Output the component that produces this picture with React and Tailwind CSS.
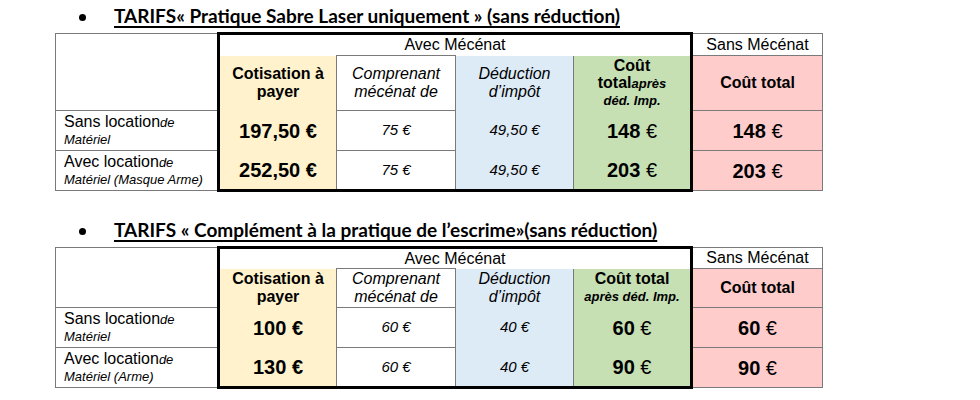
import React from "react";

const table1 = {
  h1: "h-[22px]",
  h2: "h-[55px]",
  cout: (
    <div className="leading-[17px]">
      <div className="text-[16px] font-bold">Coût</div>
      <div>
        <span className="text-[16px] font-bold">total</span>
        <span className="text-[13px] font-bold italic">après</span>
      </div>
      <div className="text-[13px] font-bold italic">déd. Imp.</div>
    </div>
  ),
  rows: [
    { a: "Sans location", b: "Matériel", cot: "197,50 €", comp: "75 €", ded: "49,50 €", tot: "148" },
    { a: "Avec location", b: "Matériel (Masque Arme)", cot: "252,50 €", comp: "75 €", ded: "49,50 €", tot: "203" },
  ],
};

const table2 = {
  h1: "h-[21px]",
  h2: "h-[39px]",
  cout: (
    <div className="leading-[18px]">
      <div className="text-[16px] font-bold">Coût total</div>
      <div className="text-[13px] font-bold italic">après déd. Imp.</div>
    </div>
  ),
  rows: [
    { a: "Sans location", b: "Matériel", cot: "100 €", comp: "60 €", ded: "40 €", tot: "60" },
    { a: "Avec location", b: "Matériel (Arme)", cot: "130 €", comp: "60 €", ded: "40 €", tot: "90" },
  ],
};

function Title({ children }) {
  return (
    <div className="flex items-center h-[32px] pl-[80px]">
      <div className="w-[34px] flex">
        <div className="w-[7px] h-[7px] rounded-full bg-black ml-[-1px] mt-[2px]"></div>
      </div>
      <h2
        className="text-[19px] font-bold underline underline-offset-[3px] decoration-[1.5px] text-black whitespace-nowrap"
        style={{ fontFamily: "Lato, 'Open Sans', sans-serif" }}
      >
        {children}
      </h2>
    </div>
  );
}

function PriceTable({ t }) {
  return (
    <table className="table-fixed border-collapse ml-[55px] text-black" style={{ fontFamily: "'Liberation Sans', Arial, sans-serif" }}>
      <colgroup>
        <col className="w-[163px]" />
        <col className="w-[118px]" />
        <col className="w-[119px]" />
        <col className="w-[118px]" />
        <col className="w-[118px]" />
        <col className="w-[131px]" />
      </colgroup>
      <tbody>
        <tr className={t.h1}>
          <td rowSpan={2} className="border border-[#7a7a7a]"></td>
          <td colSpan={4} className="border-t-[3px] border-x-[3px] border-black text-center text-[16px] leading-none">
            Avec Mécénat
          </td>
          <td className="border border-[#7a7a7a] text-center text-[16px] leading-none">Sans Mécénat</td>
        </tr>
        <tr className={t.h2}>
          <td className="bg-[#fff2cc] border-l-[3px] border-l-black border-r border-r-[#7a7a7a] text-center text-[16px] font-bold leading-[18px]">
            Cotisation à<br />payer
          </td>
          <td className="border border-[#7a7a7a] text-center text-[16px] italic leading-[18px]">
            Comprenant<br />mécénat de
          </td>
          <td className="bg-[#ddebf7] border-x border-[#7a7a7a] text-center text-[16px] italic leading-[18px]">
            Déduction<br />d’impôt
          </td>
          <td className="bg-[#c6e0b4] border-l border-l-[#7a7a7a] border-r-[3px] border-r-black text-center">
            {t.cout}
          </td>
          <td className="bg-[#ffcccc] border border-[#7a7a7a] text-center text-[16px] font-bold">Coût total</td>
        </tr>
        {t.rows.map((r, i) => {
          const last = i === t.rows.length - 1;
          return (
            <tr key={i} className="h-[40px]">
              <td className="border border-[#7a7a7a] pl-[8px] leading-[16px]">
                <span className="text-[16px]">{r.a}</span>
                <span className="text-[13px] italic">de</span>
                <br />
                <span className="text-[13px] italic">{r.b}</span>
              </td>
              <td
                className={
                  last
                    ? "bg-[#fff2cc] border-l-[3px] border-b-[3px] border-black border-r border-r-[#7a7a7a] text-center text-[20px] font-bold"
                    : "bg-[#fff2cc] border-l-[3px] border-l-black border-r border-r-[#7a7a7a] text-center text-[20px] font-bold"
                }
              >
                {r.cot}
              </td>
              <td
                className={
                  last
                    ? "border border-[#7a7a7a] border-b-[3px] border-b-black text-center text-[15px] italic"
                    : "border border-[#7a7a7a] text-center text-[15px] italic"
                }
              >
                {r.comp}
              </td>
              <td
                className={
                  last
                    ? "bg-[#ddebf7] border-x border-[#7a7a7a] border-b-[3px] border-b-black text-center text-[15px] italic"
                    : "bg-[#ddebf7] border-x border-[#7a7a7a] text-center text-[15px] italic"
                }
              >
                {r.ded}
              </td>
              <td
                className={
                  last
                    ? "bg-[#c6e0b4] border-l border-l-[#7a7a7a] border-r-[3px] border-b-[3px] border-r-black border-b-black text-center text-[20px]"
                    : "bg-[#c6e0b4] border-l border-l-[#7a7a7a] border-r-[3px] border-r-black text-center text-[20px]"
                }
              >
                <span className="font-bold">{r.tot}</span> €
              </td>
              <td className="bg-[#ffcccc] border border-[#7a7a7a] text-center text-[20px]">
                <span className="font-bold">{r.tot}</span> €
              </td>
            </tr>
          );
        })}
      </tbody>
    </table>
  );
}

export default function App() {
  return (
    <div className="w-[980px] h-[400px] bg-white overflow-hidden">
      <Title>TARIFS« Pratique Sabre Laser uniquement » (sans réduction)</Title>
      <PriceTable t={table1} />
      <div className="h-[22px]"></div>
      <Title>TARIFS « Complément à la pratique de l’escrime»(sans réduction)</Title>
      <PriceTable t={table2} />
    </div>
  );
}
